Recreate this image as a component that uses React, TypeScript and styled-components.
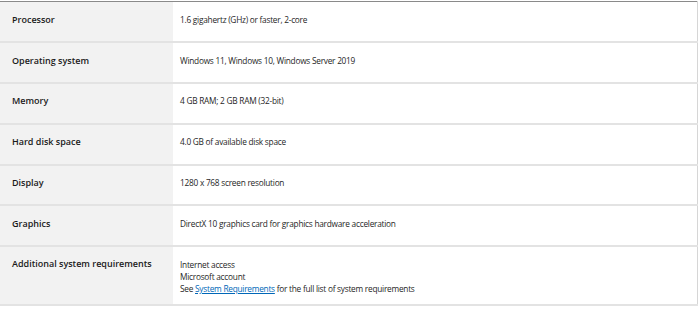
import * as React from "react";
import styled, { createGlobalStyle } from "styled-components";

const GlobalStyle = createGlobalStyle`
  html, body {
    margin: 0;
    padding: 0;
    background: #ffffff;
  }
  body {
    font-family: "Open Sans", "Noto Sans", sans-serif;
    color: #1a1a1a;
  }
`;

const rows: { label: string; value: React.ReactNode }[] = [
  { label: "Processor", value: "1.6 gigahertz (GHz) or faster, 2-core" },
  { label: "Operating system", value: "Windows 11, Windows 10, Windows Server 2019" },
  { label: "Memory", value: "4 GB RAM; 2 GB RAM (32-bit)" },
  { label: "Hard disk space", value: "4.0 GB of available disk space" },
  { label: "Display", value: "1280 x 768 screen resolution" },
  { label: "Graphics", value: "DirectX 10 graphics card for graphics hardware acceleration" },
];

const App = () => {
  return (
    <>
      <GlobalStyle />
      <SpecTable>
        <tbody>
          {rows.map((r) => (
            <Row key={r.label}>
              <Label>{r.label}</Label>
              <Value>{r.value}</Value>
            </Row>
          ))}
          <Row>
            <Label $top>Additional system requirements</Label>
            <Value $top>
              <Line>Internet access</Line>
              <Line>Microsoft account</Line>
              <Line>
                See <Link href="#">System Requirements</Link> for the full list of
                system requirements
              </Line>
            </Value>
          </Row>
        </tbody>
      </SpecTable>
    </>
  );
};

export default App;

const SpecTable = styled.table`
  width: 698px;
  margin-top: 1px;
  border-collapse: collapse;
  border-top: 1px solid #8a8a8a;
  border-right: 1px solid #d6d6d6;
`;

const Row = styled.tr`
  border-bottom: 2px solid #e3e3e3;
`;

const Label = styled.td<{ $top?: boolean }>`
  width: 173px;
  box-sizing: border-box;
  height: 40.8px;
  padding: ${(p) => (p.$top ? "11px 11px 9px 12px" : "0 11px 4px 12px")};
  vertical-align: ${(p) => (p.$top ? "top" : "middle")};
  background: #f2f2f2;
  font-size: 9px;
  font-weight: 600;
  line-height: 12px;
  white-space: nowrap;
  color: #1a1a1a;
`;

const Value = styled.td<{ $top?: boolean }>`
  padding: ${(p) => (p.$top ? "12px 7px 9px" : "0 7px 4px")};
  vertical-align: ${(p) => (p.$top ? "top" : "middle")};
  font-size: 8.3px;
  letter-spacing: -0.25px;
  line-height: 12px;
  color: #262626;
`;

const Line = styled.div``;

const Link = styled.a`
  color: #0067b8;
  text-decoration: underline;
`;
